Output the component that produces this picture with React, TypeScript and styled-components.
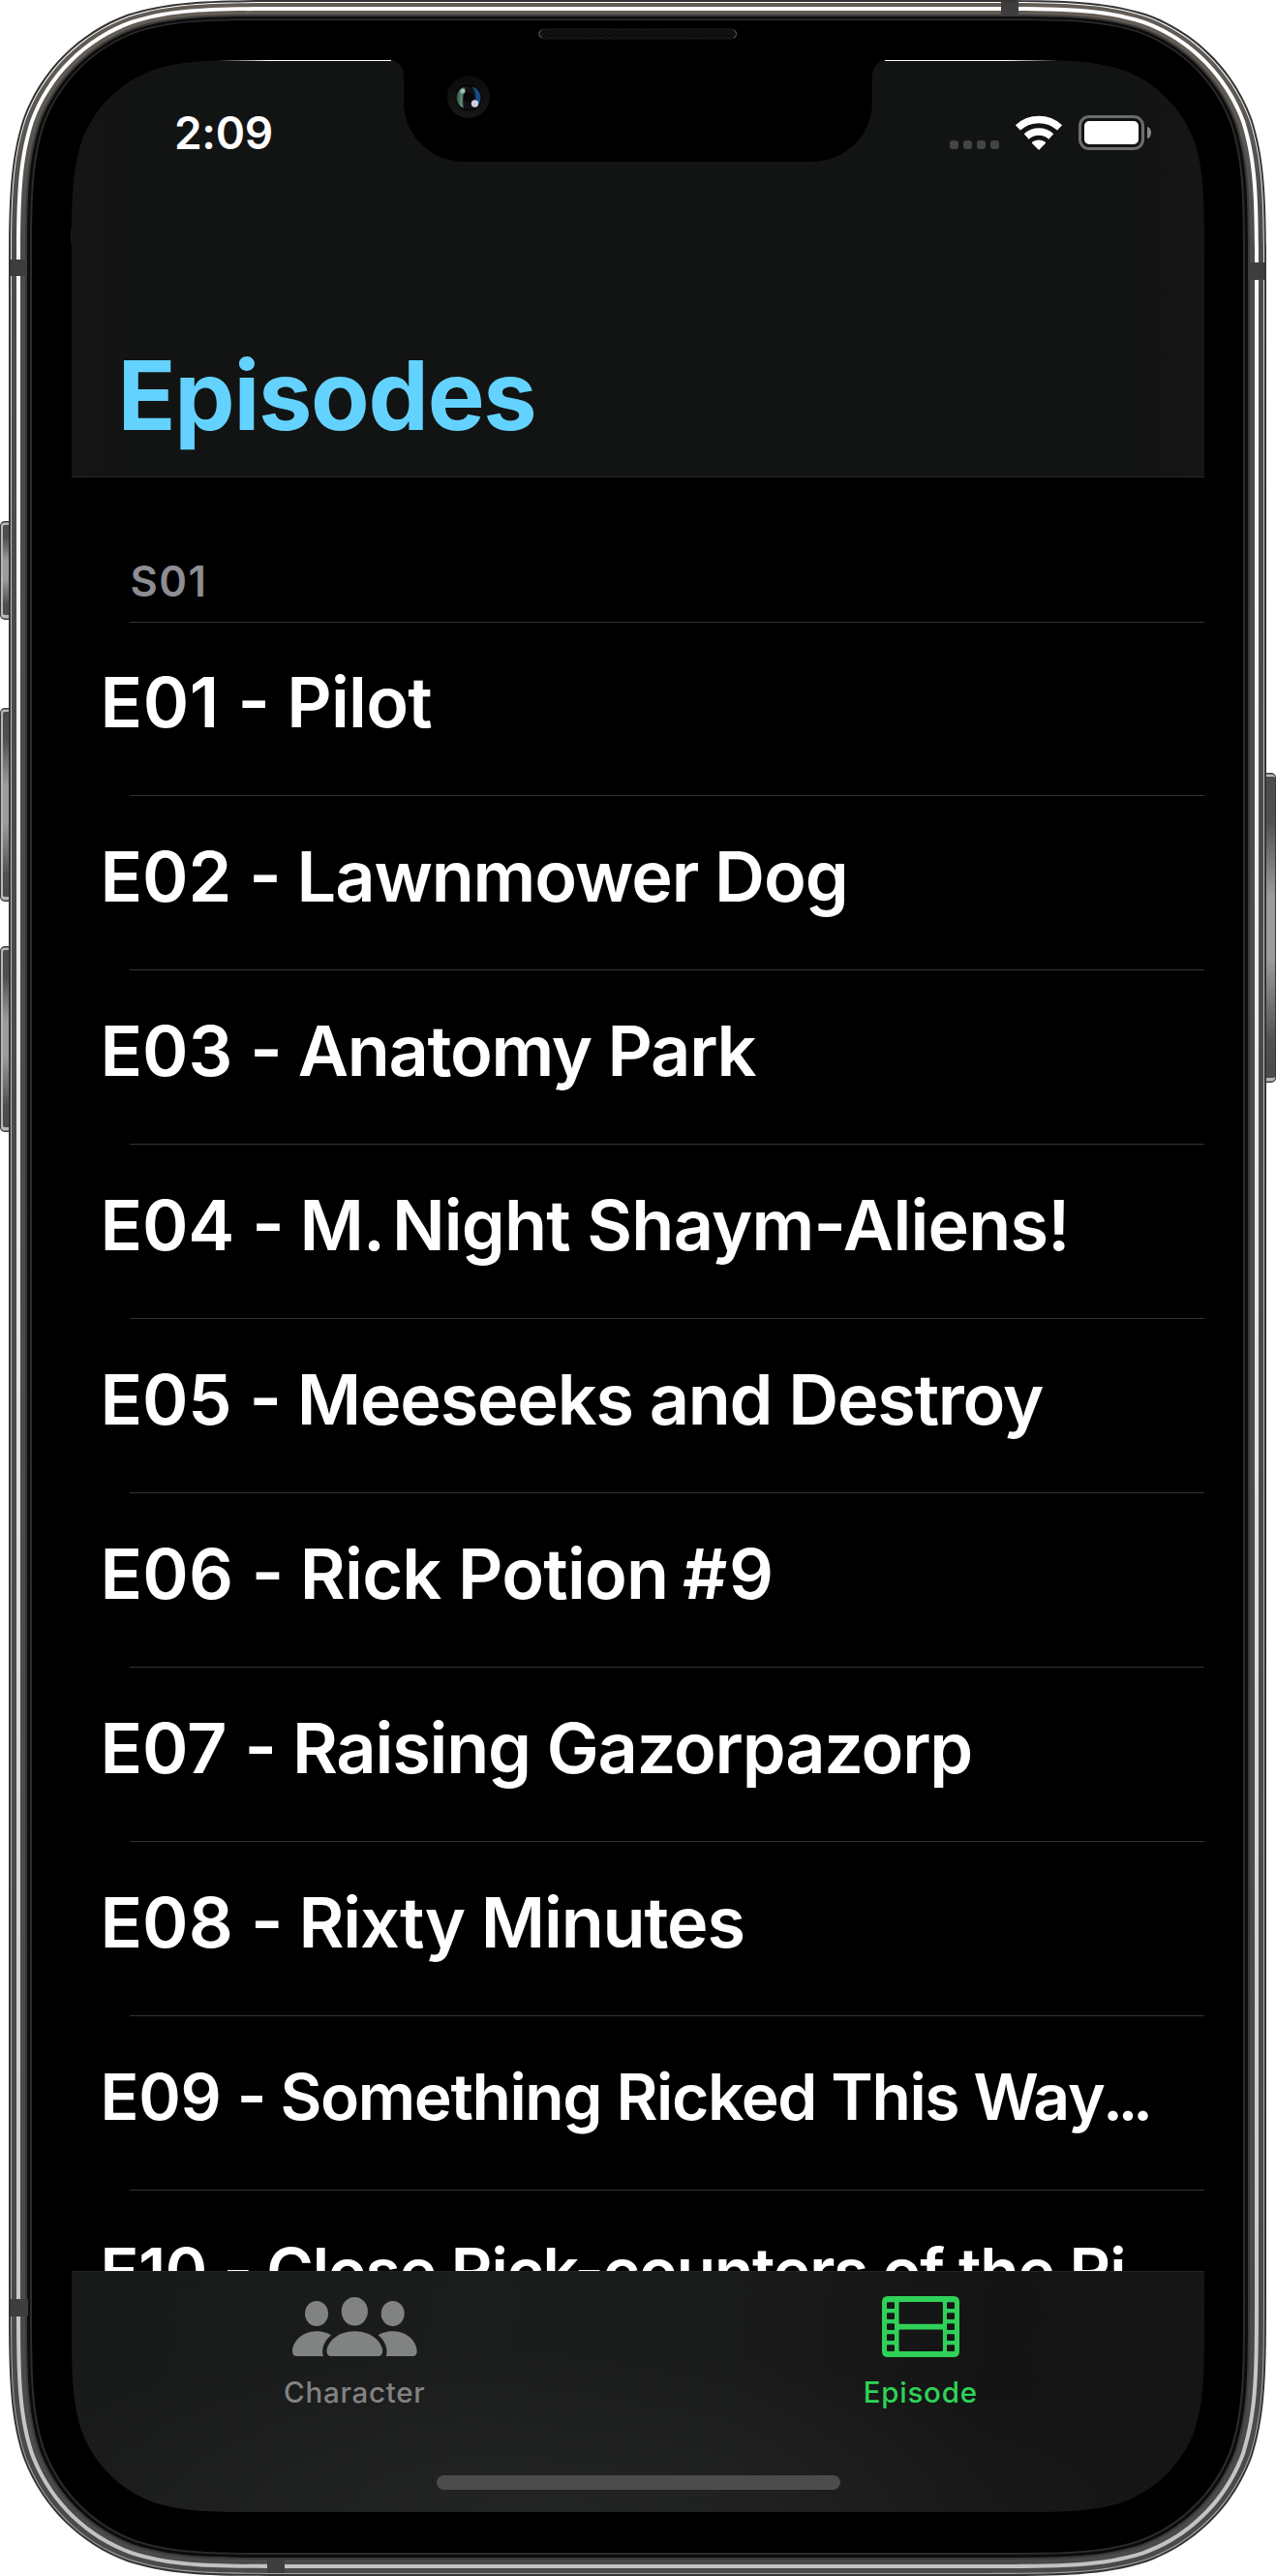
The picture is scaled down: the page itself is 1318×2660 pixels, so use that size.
import React from 'react';
import styled, { createGlobalStyle } from 'styled-components';

const GlobalStyle = createGlobalStyle`
  * { box-sizing: border-box; }
  html, body { margin: 0; padding: 0; background: #fff; }
  body { font-family: Inter, "Liberation Sans", sans-serif; }
`;

const DEVICE_W = 1318;
const DEVICE_H = 2660;

const Device = styled.main`
  position: relative;
  width: ${DEVICE_W}px;
  height: ${DEVICE_H}px;
  padding: 62px 74px 66px;
  overflow: hidden;
  background: #fff;
`;

const Screen = styled.div`
  display: flex;
  flex-direction: column;
  width: 1170px;
  height: 2532px;
  background: #000;
  color: #fff;
  overflow: hidden;
`;

const NavHeader = styled.header`
  display: flex;
  flex-direction: column;
  justify-content: space-between;
  flex: none;
  height: 431px;
  background: linear-gradient(90deg, #151515 0, #121413 60px, #121413 1100px, #151515 100%);
  border-bottom: 1px solid #262726;
`;

const StatusBar = styled.div`
  display: flex;
  justify-content: space-between;
  align-items: center;
  height: 56px;
  margin-top: 47px;
  padding: 0 55px 0 106px;
`;

const Clock = styled.time`
  font-size: 46px;
  font-weight: 600;
  line-height: 56px;
  letter-spacing: -0.3px;
`;

const StatusIcons = styled.div`
  display: flex;
  align-items: center;
`;

const SignalDots = styled.div`
  display: flex;
  gap: 5px;
  margin: 24px 17px 0 0;
`;

const SignalDot = styled.span`
  width: 9px;
  height: 9px;
  border-radius: 3px;
  background: #434444;
`;

const WifiGlyph = styled.svg`
  display: block;
  width: 48px;
  height: 37px;
  margin-right: 17px;
  overflow: visible;
`;

const Battery = styled.div`
  display: flex;
  width: 68px;
  height: 36px;
  padding: 3px;
  border: 3px solid #6c6d6d;
  border-radius: 11px;
`;

const BatteryLevel = styled.span`
  flex: 1;
  border-radius: 5px;
  background: #fff;
`;

const BatteryTip = styled.span`
  width: 4px;
  height: 12px;
  margin-left: 3px;
  border-radius: 0 4px 4px 0 / 0 6px 6px 0;
  background: #858686;
`;

const LargeTitle = styled.h1`
  margin: 0 0 24px;
  padding-left: 47.5px;
  font-size: 99px;
  font-weight: 700;
  line-height: 120px;
  letter-spacing: -1.3px;
  color: #64d2ff;
`;

const List = styled.section`
  flex: 1;
  min-height: 0;
  overflow: hidden;
`;

const SectionHeader = styled.h2`
  display: flex;
  align-items: flex-end;
  height: 150px;
  margin: 0 0 0 60px;
  padding: 0 0 14px 0.5px;
  border-bottom: 1px solid #343435;
  font-size: 43.6px;
  font-weight: 600;
  line-height: 54px;
  letter-spacing: 1.5px;
  color: #8d8d93;
`;

const Rows = styled.ul`
  margin: 0;
  padding: 0;
  list-style: none;
`;

const Row = styled.li<{ $first: boolean }>`
  display: flex;
  align-items: center;
  height: ${(p) => (p.$first ? 179 : 180)}px;
  margin-left: 60px;
  padding-bottom: 14px;
  border-bottom: 1px solid #343435;
`;

const RowTitle = styled.span<{ $compact?: boolean }>`
  margin-left: -30.5px;
  font-size: ${(p) => (p.$compact ? 66 : 72)}px;
  font-weight: 600;
  line-height: 88px;
  font-feature-settings: "calt" 0;
  white-space: pre;
`;

const Run = styled.span<{ $tracking: number }>`
  letter-spacing: ${(p) => p.$tracking}px;
`;

const Hyphen = styled.span`
  position: relative;
  top: -2px;
`;

const TabBar = styled.nav`
  display: flex;
  flex-direction: column;
  flex: none;
  height: 249px;
  border-top: 1px solid #222323;
  background:
    radial-gradient(ellipse 640px 170px at 42% 100%, rgba(38, 40, 39, 0.75), rgba(38, 40, 39, 0)),
    linear-gradient(96deg, #181919 0, #1b1c1c 35%, #191a1a 58%, #131413 80%, #151515 100%);
`;

const Tabs = styled.div`
  display: flex;
  padding-right: 1px;
`;

const Tab = styled.a<{ $active?: boolean }>`
  display: flex;
  flex: 1;
  flex-direction: column;
  align-items: center;
  padding-top: 25px;
  color: ${(p) => (p.$active ? '#30d158' : '#818282')};
`;

const TabIcon = styled.svg`
  display: block;
  fill: currentColor;
  overflow: visible;
`;

const TabLabel = styled.span`
  margin-top: 18px;
  font-size: 29.5px;
  font-weight: 500;
  line-height: 36px;
  letter-spacing: 0.75px;
`;

const HomeIndicator = styled.div`
  width: 417px;
  height: 15px;
  margin: auto auto 23px;
  border-radius: 8px;
  background: #4c4c4c;
`;

const Bezel = styled.svg`
  position: absolute;
  inset: 0;
  pointer-events: none;
`;

/* Rounded rectangle with continuous ("squircle") corners. */
function squircle(x0: number, y0: number, x1: number, y1: number, r: number): string {
  const a = 1.52866 * r, b = 1.08849 * r, c = 0.86841 * r;
  const d = 0.63149 * r, e = 0.07491 * r, f = 0.37282 * r, g = 0.16906 * r;
  const n = (v: number) => v.toFixed(2);
  const p = (x: number, y: number) => `${n(x)} ${n(y)}`;
  return [
    `M${p(x0 + a, y0)}`,
    `L${p(x1 - a, y0)}`,
    `C${p(x1 - b, y0)} ${p(x1 - c, y0)} ${p(x1 - d, y0 + e)}`,
    `C${p(x1 - f, y0 + g)} ${p(x1 - g, y0 + f)} ${p(x1 - e, y0 + d)}`,
    `C${p(x1, y0 + c)} ${p(x1, y0 + b)} ${p(x1, y0 + a)}`,
    `L${p(x1, y1 - a)}`,
    `C${p(x1, y1 - b)} ${p(x1, y1 - c)} ${p(x1 - e, y1 - d)}`,
    `C${p(x1 - g, y1 - f)} ${p(x1 - f, y1 - g)} ${p(x1 - d, y1 - e)}`,
    `C${p(x1 - c, y1)} ${p(x1 - b, y1)} ${p(x1 - a, y1)}`,
    `L${p(x0 + a, y1)}`,
    `C${p(x0 + b, y1)} ${p(x0 + c, y1)} ${p(x0 + d, y1 - e)}`,
    `C${p(x0 + f, y1 - g)} ${p(x0 + g, y1 - f)} ${p(x0 + e, y1 - d)}`,
    `C${p(x0, y1 - c)} ${p(x0, y1 - b)} ${p(x0, y1 - a)}`,
    `L${p(x0, y0 + a)}`,
    `C${p(x0, y0 + b)} ${p(x0, y0 + c)} ${p(x0 + e, y0 + d)}`,
    `C${p(x0 + g, y0 + f)} ${p(x0 + f, y0 + g)} ${p(x0 + d, y0 + e)}`,
    `C${p(x0 + c, y0)} ${p(x0 + b, y0)} ${p(x0 + a, y0)}Z`,
  ].join('');
}

/* Frame layers from the outside in: side inset, top inset, fill. */
const FRAME_LAYERS: [number, number, string][] = [
  [0, 0, '#343434'],
  [2, 2, 'url(#rim)'],
  [3, 3, 'url(#steel)'],
  [8, 7, 'url(#shine)'],
  [12, 11, 'url(#steel)'],
  [17, 15, '#3b3a39'],
  [19, 17, '#0c0c0c'],
  [22, 19.5, '#2c2c2c'],
];

/* Metal rings stop under the black border; the border alone meets the screen edge. */
const RING_HOLE = squircle(45, 34, 1273, 2624, 160);
const SCREEN_HOLE = squircle(74, 62, 1244, 2594, 134);
const BLACK_BORDER = squircle(33, 21, 1284, 2636, 171);

const ANTENNA_BANDS: [number, number, number, number][] = [
  [11, 268, 17, 17],
  [1289, 271, 17, 18],
  [1034, 2, 18, 15],
  [11, 2374, 18, 18],
  [276, 2642, 18, 15],
];

const SIDE_BUTTONS: [number, number, number][] = [
  [0, 538, 102],
  [0, 731, 200],
  [0, 977, 192],
  [1302, 798, 320],
];

function PhoneBezel() {
  return (
    <Bezel width={DEVICE_W} height={DEVICE_H} viewBox={`0 0 ${DEVICE_W} ${DEVICE_H}`} aria-hidden="true">
      <defs>
        <linearGradient id="steel" x1="0" y1="0" x2="0" y2="1">
          <stop offset="0" stopColor="#625c55" />
          <stop offset="0.035" stopColor="#5e5953" />
          <stop offset="0.09" stopColor="#4b4b4b" />
          <stop offset="1" stopColor="#4a4a4a" />
        </linearGradient>
        <linearGradient id="shine" x1="0" y1="0" x2="0" y2="1">
          <stop offset="0" stopColor="#fff" />
          <stop offset="0.15" stopColor="#f7f7f7" />
          <stop offset="0.5" stopColor="#e6e6e6" />
          <stop offset="1" stopColor="#c2c2c2" />
        </linearGradient>
        <linearGradient id="rim" x1="0" y1="0" x2="0" y2="1">
          <stop offset="0" stopColor="#fff" />
          <stop offset="0.08" stopColor="#e4eae8" />
          <stop offset="0.2" stopColor="#bdbdbd" />
          <stop offset="1" stopColor="#a4a6a5" />
        </linearGradient>
        <linearGradient id="button" x1="0" y1="0" x2="0" y2="1">
          <stop offset="0" stopColor="#4b4b4b" />
          <stop offset="0.15" stopColor="#505050" />
          <stop offset="0.4" stopColor="#9c9c9c" />
          <stop offset="0.6" stopColor="#9c9c9c" />
          <stop offset="0.88" stopColor="#505050" />
          <stop offset="1" stopColor="#4a4a4a" />
        </linearGradient>
        <linearGradient id="glintLeft" x1="0" x2="1">
          <stop offset="0" stopColor="#fff" stopOpacity="0" />
          <stop offset="0.3" stopColor="#fff" />
          <stop offset="1" stopColor="#fff" />
        </linearGradient>
        <linearGradient id="glintRight" x1="1" x2="0">
          <stop offset="0" stopColor="#fff" stopOpacity="0" />
          <stop offset="0.3" stopColor="#fff" />
          <stop offset="1" stopColor="#fff" />
        </linearGradient>
        <linearGradient id="lensGreen" x1="0" x2="1">
          <stop offset="0" stopColor="#2c4a3c" />
          <stop offset="0.5" stopColor="#5f8b75" />
          <stop offset="1" stopColor="#1c2d25" />
        </linearGradient>
        <linearGradient id="lensRing" x1="0" y1="0" x2="0" y2="1">
          <stop offset="0" stopColor="#0a0a0a" />
          <stop offset="1" stopColor="#171717" />
        </linearGradient>
        <pattern id="mesh" width="4" height="4" patternUnits="userSpaceOnUse">
          <rect width="4" height="4" fill="#151515" />
          <rect width="2" height="2" fill="#0a0a0a" />
          <rect x="2" y="2" width="2" height="2" fill="#0a0a0a" />
        </pattern>
      </defs>

      {SIDE_BUTTONS.map(([x, y, h]) => (
        <g key={y}>
          <rect x={x} y={y} width={16} height={h} rx={5} fill="#3a3a3a" />
          <rect x={x + 1} y={y + 1.5} width={14} height={h - 3} rx={4} fill="#b9b7b6" />
          <rect x={x + 3} y={y + 4} width={12} height={h - 9} rx={2} fill="url(#button)" />
        </g>
      ))}

      {FRAME_LAYERS.map(([side, top, fill]) => (
        <path
          key={side}
          fillRule="evenodd"
          d={squircle(9 + side, top, 1308 - side, DEVICE_H - side, 195 - side) + RING_HOLE}
          fill={fill}
        />
      ))}
      <path fillRule="evenodd" d={BLACK_BORDER + SCREEN_HOLE} fill="#000" />

      {ANTENNA_BANDS.map(([x, y, w, h]) => (
        <rect key={`${x}-${y}`} x={x} y={y} width={w} height={h} fill="#3d3d3d" />
      ))}

      <path
        d="M400 60V62H404C411 63 417 69 417 78V105C417 140 445 167 480 167H838C873 167 901 140 901 105V78C901 69 907 63 914 62H918V60Z"
        fill="#000"
      />
      <rect x="224" y="62" width="180" height="1" fill="url(#glintLeft)" />
      <rect x="914" y="62" width="180" height="1" fill="url(#glintRight)" />

      <rect x="556.5" y="30" width="204" height="10" rx="5" fill="url(#mesh)" stroke="#1c1c1c" />
      <path d="M559.5 31C556 33 556 37 559.5 39M758 31C761.500 33 761.500 37 758 39" fill="none" stroke="#4a4a4a" strokeWidth="1.3" />

      <circle cx="484" cy="100" r="22" fill="url(#lensRing)" />
      <circle cx="484" cy="101" r="13.5" fill="#030303" />
      <circle cx="484" cy="101" r="12" fill="#111013" />
      <path d="M479.500 90C475 91 471.500 96 471.500 101C471.500 106 475 110.500 479 111.500C477.500 104 478 96 481.500 91Z" fill="url(#lensGreen)" />
      <path d="M488 89.500C493 91 497 96 496.500 102C496.300 106 494 109.500 490 111.500C492 104 492 96 488 89.500Z" fill="#174a86" />
      <circle cx="484" cy="100.500" r="5" fill="#050505" />
      <circle cx="478" cy="94" r="2.500" fill="#a3bfb1" />
      <circle cx="490.500" cy="107" r="3.700" fill="#d3cde0" />
    </Bezel>
  );
}

function WifiIcon() {
  return (
    <WifiGlyph viewBox="0 0 48 37" aria-hidden="true">
      <path d="M2.400 12.900A31.900 31.900 0 0 1 45.600 12.900" fill="none" stroke="#fff" strokeWidth="7.400" />
      <path d="M11.200 21.900A19 19 0 0 1 36.800 21.900" fill="none" stroke="#fff" strokeWidth="7.400" />
      <path d="M17.300 29.200C16.800 28.600 16.900 28 17.500 27.600C21.200 24.700 26.800 24.700 30.500 27.600C31.100 28 31.200 28.600 30.700 29.200L24 36Z" fill="#fff" />
    </WifiGlyph>
  );
}

function PeopleIcon() {
  const sideBody = 'M4.500 62C1.500 62 0 60 0 57C0 48 9 36.300 25 36.300C31 36.300 37 38 40 40.500C32.500 46 29.500 56 32 62Z';
  return (
    <TabIcon width="129" height="63" viewBox="0 0 129 63" aria-hidden="true">
      <ellipse cx="25" cy="18" rx="12" ry="13" />
      <ellipse cx="103.700" cy="18" rx="12" ry="13" />
      <ellipse cx="64.300" cy="15.700" rx="13.600" ry="14.800" />
      <path d={sideBody} />
      <path d={sideBody} transform="translate(128.700 0) scale(-1 1)" />
      <path d="M40.500 62C37 62 35.500 60 35.500 57C35.500 48.500 46 36.300 64.300 36.300C82.600 36.300 93.200 48.500 93.200 57C93.200 60 91.500 62 88.200 62Z" />
    </TabIcon>
  );
}

const PERFORATIONS = [6.3, 17.2, 28.2, 39.2, 50.2];

function FilmIcon() {
  const hole = (x: number, y: number, w: number, h: number) =>
    `M${x + 1} ${y}h${w - 2}q1 0 1 1v${h - 2}q0 1 -1 1h${2 - w}q-1 0 -1 -1v${2 - h}q0 -1 1 -1Z`;
  const d = [
    'M6 0H74Q80 0 80 6V57Q80 63 74 63H6Q0 63 0 57V6Q0 0 6 0Z',
    ...PERFORATIONS.map((y) => hole(5, y, 8, 6.8)),
    ...PERFORATIONS.map((y) => hole(67, y, 8, 6.8)),
    hole(17.6, 6, 45.3, 22.7),
    hole(17.6, 34.5, 45.3, 22.5),
  ].join('');
  return (
    <TabIcon width="80" height="63" viewBox="0 0 80 63" aria-hidden="true">
      <path fillRule="evenodd" d={d} />
    </TabIcon>
  );
}

interface Episode {
  code: string;
  codeTracking: number;
  /* The name as runs of text, each with its own letter spacing. */
  name: [string, number][];
  truncated?: boolean;
}

const EPISODES: Episode[] = [
  { code: 'E01', codeTracking: 0.24, name: [['Pilot', -0.75]] },
  { code: 'E02', codeTracking: -0.45, name: [['Lawnmower Dog', -1.12]] },
  { code: 'E03', codeTracking: -0.43, name: [['Anatomy Park', -1.31]] },
  { code: 'E04', codeTracking: -0.48, name: [['M', -1], ['. ', -4.8], ['Night Shaym-Aliens!', -0.8]] },
  { code: 'E05', codeTracking: -0.48, name: [['Meeseeks and Destroy', -1.23]] },
  { code: 'E06', codeTracking: -0.1, name: [['Rick Potion', -0.75], [' ', -3.5], ['#', 1.5], ['9', 0]] },
  { code: 'E07', codeTracking: -0.43, name: [['Raising Gazorpazorp', -1.19]] },
  { code: 'E08', codeTracking: -0.33, name: [['Rixty Minutes', -1.18]] },
  {
    code: 'E09',
    codeTracking: -0.63,
    name: [['Something Ricked This ', -1.4], ['Wa', -2], ['y', -3], ['...', -5.5]],
    truncated: true,
  },
  {
    code: 'E10',
    codeTracking: -0.6,
    name: [['Close Rick-counters of the Ri', -1.28], ['...', -5.5]],
    truncated: true,
  },
];

/* Lifts each hyphen slightly so that it sits at the optical middle of the line. */
function withHyphens(text: string): React.ReactNode[] {
  return text.split(/(-)/).map((s, i) => (s === '-' ? <Hyphen key={i}>-</Hyphen> : s));
}

export default function App() {
  return (
    <>
      <GlobalStyle />
      <Device>
        <Screen>
          <NavHeader>
            <StatusBar>
              <Clock>2:09</Clock>
              <StatusIcons>
                <SignalDots>
                  <SignalDot />
                  <SignalDot />
                  <SignalDot />
                  <SignalDot />
                </SignalDots>
                <WifiIcon />
                <Battery>
                  <BatteryLevel />
                </Battery>
                <BatteryTip />
              </StatusIcons>
            </StatusBar>
            <LargeTitle>Episodes</LargeTitle>
          </NavHeader>
          <List>
            <SectionHeader>S01</SectionHeader>
            <Rows>
              {EPISODES.map((ep, i) => (
                <Row key={ep.code} $first={i === 0}>
                  <RowTitle $compact={ep.truncated}>
                    <Run $tracking={ep.codeTracking + 0.35}>{`${ep.code} `}</Run>
                    <Run $tracking={ep.codeTracking - 0.7}>{withHyphens('- ')}</Run>
                    {ep.name.map(([text, tracking]) => (
                      <Run key={text} $tracking={tracking}>
                        {withHyphens(text)}
                      </Run>
                    ))}
                  </RowTitle>
                </Row>
              ))}
            </Rows>
          </List>
          <TabBar>
            <Tabs>
              <Tab>
                <PeopleIcon />
                <TabLabel>Character</TabLabel>
              </Tab>
              <Tab $active>
                <FilmIcon />
                <TabLabel>Episode</TabLabel>
              </Tab>
            </Tabs>
            <HomeIndicator />
          </TabBar>
        </Screen>
        <PhoneBezel />
      </Device>
    </>
  );
}
